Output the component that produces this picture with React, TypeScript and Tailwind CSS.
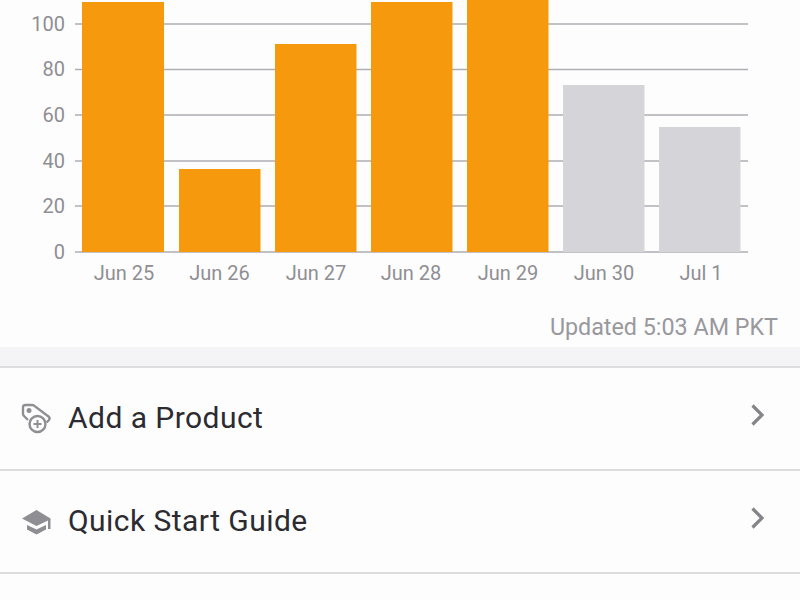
const bars = [
  { x: 82, w: 82, y: 2, c: "#f7990c" },
  { x: 179, w: 81.5, y: 169, c: "#f7990c" },
  { x: 275, w: 81.5, y: 44, c: "#f7990c" },
  { x: 371, w: 81.5, y: 2, c: "#f7990c" },
  { x: 467, w: 81.5, y: -2, c: "#f7990c" },
  { x: 563, w: 81.5, y: 85, c: "#d5d5d9" },
  { x: 659, w: 81.5, y: 127, c: "#d5d5d9" },
];
const ticks = [
  { y: 24, t: "100" },
  { y: 69.5, t: "80" },
  { y: 115, t: "60" },
  { y: 161, t: "40" },
  { y: 206, t: "20" },
  { y: 252, t: "0" },
];
const labels = [
  { x: 124, t: "Jun 25" },
  { x: 219.5, t: "Jun 26" },
  { x: 316, t: "Jun 27" },
  { x: 411, t: "Jun 28" },
  { x: 508, t: "Jun 29" },
  { x: 604, t: "Jun 30" },
  { x: 701, t: "Jul 1" },
];

function TagPlus() {
  return (
    <svg width="32" height="32" viewBox="0 0 32 32" fill="none" stroke="#8e8e93" strokeWidth="2.4">
      <path d="M7 17 L3 13 Q2 12 2 11 V4.5 Q2 2 4.5 2 H11 Q12.2 2 13 2.6 L27.5 13.5 Q29.4 15.2 28 17 L25.5 19.5" strokeLinejoin="round" />
      <circle cx="8" cy="7.5" r="2.5" fill="#8e8e93" stroke="none" />
      <circle cx="16.5" cy="21" r="8" />
      <path d="M16.5 17 V25 M12.5 21 H20.5" strokeWidth="2" />
    </svg>
  );
}

function GradCap() {
  return (
    <svg width="32" height="26" viewBox="0 0 32 26" fill="#8e8e93">
      <path d="M15.5 1 L1 9.5 L15.5 17 L27 11.5 V20 H29.5 V9.5 Z" />
      <path d="M6 16 V20.5 L15.5 25.5 L25 20.5 V16 L15.5 20.5 Z" />
    </svg>
  );
}

function Chevron() {
  return (
    <svg width="16" height="24" viewBox="0 0 16 24" fill="none" stroke="#858589" strokeWidth="3.2" className="mb-2">
      <path d="M2.5 2.5 L12 12 L2.5 21.5" />
    </svg>
  );
}

function Row({ icon, label }: { icon: React.ReactNode; label: string }) {
  return (
    <div className="flex h-[103px] items-center border-b-2 border-[#dcdbde] pl-[21px] pr-[34px]">
      <div className="flex w-[47px] items-center">{icon}</div>
      <span className="mb-px flex-1 text-[30px] leading-none tracking-[0.45px] text-[#2b2b30]">{label}</span>
      <Chevron />
    </div>
  );
}

export default function App() {
  return (
    <div className="h-[600px] w-[800px] overflow-hidden bg-[#fefdfe] font-['Roboto',sans-serif]">
      <div className="flex h-[347px] flex-col">
        <svg width="800" height="296" viewBox="0 0 800 296" className="block shrink-0" style={{ fontFamily: "Roboto, sans-serif" }}>
          {ticks.map((k) => (
            <g key={k.t}>
              <line x1="75" x2="748" y1={k.y} y2={k.y} stroke="#aeaeb3" strokeWidth="1.4" />
              <text x="65" y={k.y + 6.5} textAnchor="end" fontSize="20" fill="#8e8e93">{k.t}</text>
            </g>
          ))}
          {bars.map((b) => (
            <rect key={b.x} x={b.x} y={b.y} width={b.w} height={252 - b.y} fill={b.c} />
          ))}
          {labels.map((l) => (
            <text key={l.t} x={l.x} y="280" textAnchor="middle" fontSize="20" fill="#8e8e93">{l.t}</text>
          ))}
        </svg>
        <div className="pr-[22px] pt-[17px] text-right text-[23.3px] leading-[28px] text-[#98989d]">Updated 5:03 AM PKT</div>
      </div>
      <div className="h-[21px] border-b-2 border-[#dcdbde] bg-[#f4f3f6]" />
      <Row icon={<TagPlus />} label="Add a Product" />
      <Row icon={<GradCap />} label="Quick Start Guide" />
    </div>
  );
}
